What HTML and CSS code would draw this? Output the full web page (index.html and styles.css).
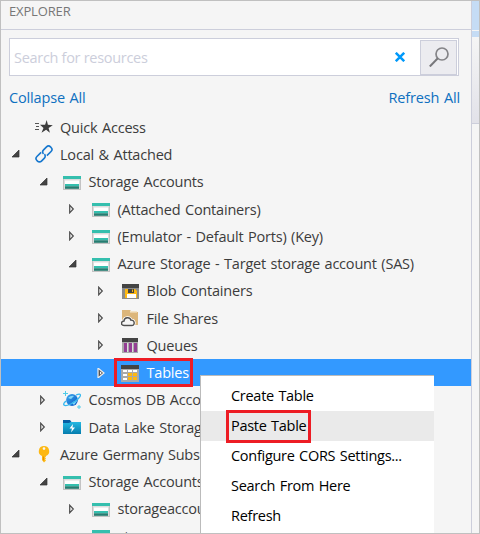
FILE: index.html
```html
<!DOCTYPE html>
<html lang="en">
<head>
<meta charset="utf-8">
<title>Explorer</title>
<link rel="stylesheet" href="styles.css">
</head>
<body>
<svg class="defs" width="0" height="0" aria-hidden="true">
  <linearGradient id="planet" x2="1" y2="1"><stop stop-color="#3da6ed"/><stop offset="1" stop-color="#0759c5"/></linearGradient>
  <linearGradient id="lake" x2="0" y2="1"><stop stop-color="#25b8e2"/><stop offset="1" stop-color="#057dae"/></linearGradient>
  <symbol id="open" viewBox="0 0 10 10"><path d="M8 1v7H1z" fill="#444" stroke="#333" stroke-width=".7"/></symbol>
  <symbol id="closed" viewBox="0 0 10 10"><path d="M1.7 1.2v7.6L5.3 5z" fill="#eee" stroke="#4c4c4c" stroke-width="1.2"/></symbol>
  <symbol id="closed-selected" viewBox="0 0 10 10"><path d="M1 0v10L7 5z" fill="#555" stroke="#eee" stroke-width="1.200"/><path d="M3 3.500v3L4.800 5z" fill="#fff"/></symbol>
  <symbol id="star" viewBox="0 0 18 18"><path d="M0 5.500h4M1 8.500h3M0 11.500h4" stroke="#555"/><path d="M11.700 2l1.200 4.800 4.900.4-4.200 2.700 1.300 4.900-3.800-3.100-4.600 3 2-4.800L5 6.700l5.100.1z" fill="#3c3c3c"/></symbol>
  <symbol id="link" viewBox="0 0 18 18"><g transform="rotate(-45 9 9)" fill="none" stroke="#1677ce" stroke-width="1.6"><path d="M8.1 5.8H2.2A2.8 2.8 0 0 0-.6 8.6v.8a2.8 2.8 0 0 0 2.8 2.8h4.2a2.8 2.8 0 0 0 2.8-2.8"/><path d="M9.9 12.2h5.9a2.8 2.8 0 0 0 2.8-2.8v-.8a2.8 2.8 0 0 0-2.8-2.8h-4.2a2.8 2.8 0 0 0-2.8 2.8"/></g></symbol>
  <symbol id="storage" viewBox="0 0 18 18"><path d="M0 3h18v14H0z" fill="#c3c3c3"/><path d="M1 6h16v10H1z" fill="#ddd"/><path d="M0 3h18v3H0z" fill="#35bfae"/><path d="M2 7.500h14V11H2z" fill="#fff"/><path d="M2 11h14v2.300H2z" fill="#35bfae"/><path d="M2 13.300h14v2.500H2z" fill="#267d71"/></symbol>
  <symbol id="blob" viewBox="0 0 18 18"><path d="M1 2h17v4H1z" fill="#444"/><path d="M1 6h17v11H1z" fill="#8b8b8b"/><path d="M4 7h10l2 2v7H4z" fill="#fcb813"/><path d="M7 7h6v4H7z" fill="#444"/><path d="M11 7.5h1v2.5h-1z" fill="#fcb813"/><path d="M6 12h9v4H6z" fill="#fff"/></symbol>
  <symbol id="share" viewBox="0 0 18 18"><path d="M1 1h8l2 2h6v13H1z" fill="#dcb67a"/><path d="M9 2h7v1.6H9z" fill="#f3e3c5"/><path d="M3.2 16.5C-.5 16.5-.3 12 3 12c.2-4 6-4.300 7-.8 3.700-.7 4.500 5.300.7 5.300z" fill="#f6f6f6" stroke="#fff" stroke-width="3"/><path d="M3.200 16.500C-.5 16.500-.3 12 3 12c.2-4 6-4.300 7-.8 3.700-.7 4.500 5.300.7 5.300z" fill="#f6f6f6" stroke="#505050" stroke-width="1.400"/></symbol>
  <symbol id="queue" viewBox="0 0 18 18"><path d="M1 2h16v4H1z" fill="#444"/><path d="M1 6h16v11H1z" fill="#aaa"/><path d="M3 7h3v9H3zM8 7h3v9H8zM13 7h3v9h-3z" fill="#943e94"/><path d="M6.500 7v9M11.500 7v9" stroke="#ddd"/></symbol>
  <symbol id="table" viewBox="0 0 18 18"><path d="M0 1h18v17H0z" fill="#aaa"/><path d="M0 1h18v4H0z" fill="#444"/><path d="M2 6h4v2H2zM7 6h4v2H7zM12 6h4v2h-4zM2 10h4v2H2zM2 14h4v2H2z" fill="#fff"/><path d="M7 9h4v3H7zM12 9h4v3h-4zM7 13h4v3H7zM12 13h4v3h-4z" fill="#fcb813"/></symbol>
  <symbol id="cosmos" viewBox="0 0 18 18"><circle cx="9" cy="9" r="5.900" fill="url(#planet)"/><path d="M5 7q3-3 6-2l-3 3zM9 12q3-3 5-2l-3 4z" fill="#81d6f7"/><path d="M13 4c5-2 6 0 2 4-4 4-12 8-14 6-.9-.9.200-2.300 2-4" fill="none" stroke="#35b8ef" stroke-width="1.300"/><path d="M2.500 0v5M0 2.500h5M16 14v4M14 16h4" stroke="#50cce8"/></symbol>
  <symbol id="folder" viewBox="0 0 18 18"><path d="M0 2h7l1.500 2H18v4H0z" fill="#075ea4"/><path d="M0 5h6l2-1h10v12H0z" fill="url(#lake)"/><path d="M10 6L6.500 10.500h2.500l-1 4 4-5H9.500z" fill="#fff"/></symbol>
  <symbol id="key" viewBox="0 0 18 18"><path d="M9 1a5.200 5.200 0 0 0-2 10v4l2 2.500 2-2-1-1 1-1-1-1 1-1V11A5.200 5.200 0 0 0 9 1z" fill="#fdb813"/><circle cx="9" cy="3.600" r="1.300" fill="#f5f5f5"/><path d="M8.400 11.500v4" stroke="#e38b00"/></symbol>
</svg>
<div class="window">
  <aside class="explorer">
    <header class="title">EXPLORER</header>
    <div class="search"><span class="placeholder">Search for resources</span>
      <svg class="clear" viewBox="0 0 10 10"><path d="M.8.800l8.400 8.400M9.200.8.800 9.200" stroke="#0099fa" stroke-width="2.500"/></svg>
      <span class="find"><svg viewBox="0 0 20 20"><circle cx="13" cy="7" r="6" fill="none" stroke="#848488" stroke-width="1.700"/><path d="M8.800 11.300.8 19.500" stroke="#77777b" stroke-width="2"/></svg></span>
    </div>
    <nav class="links"><span class="collapse">Collapse All</span><span class="refresh">Refresh All</span></nav>
    <div class="tree">
      <div class="row l0"><i class="arrow"></i><svg class="icon"><use href="#star"/></svg><span class="label">Quick Access</span></div>
      <div class="row l0"><svg class="arrow"><use href="#open"/></svg><svg class="icon"><use href="#link"/></svg><span class="label">Local &amp; Attached</span></div>
      <div class="row l1"><svg class="arrow"><use href="#open"/></svg><svg class="icon"><use href="#storage"/></svg><span class="label">Storage Accounts</span></div>
      <div class="row l2"><svg class="arrow"><use href="#closed"/></svg><svg class="icon"><use href="#storage"/></svg><span class="label">(Attached Containers)</span></div>
      <div class="row l2"><svg class="arrow"><use href="#closed"/></svg><svg class="icon"><use href="#storage"/></svg><span class="label">(Emulator - Default Ports) (Key)</span></div>
      <div class="row l2"><svg class="arrow"><use href="#open"/></svg><svg class="icon"><use href="#storage"/></svg><span class="label">Azure Storage - Target storage account (SAS)</span></div>
      <div class="row l3"><svg class="arrow"><use href="#closed"/></svg><svg class="icon"><use href="#blob"/></svg><span class="label">Blob Containers</span></div>
      <div class="row l3"><svg class="arrow"><use href="#closed"/></svg><svg class="icon"><use href="#share"/></svg><span class="label">File Shares</span></div>
      <div class="row l3"><svg class="arrow"><use href="#closed"/></svg><svg class="icon"><use href="#queue"/></svg><span class="label">Queues</span></div>
      <div class="row l3 selected"><svg class="arrow"><use href="#closed-selected"/></svg><svg class="icon"><use href="#table"/></svg><span class="label">Tables</span><b class="mark"></b></div>
      <div class="row l1"><svg class="arrow"><use href="#closed"/></svg><svg class="icon"><use href="#cosmos"/></svg><span class="label">Cosmos DB Accounts</span></div>
      <div class="row l1"><svg class="arrow"><use href="#closed"/></svg><svg class="icon"><use href="#folder"/></svg><span class="label">Data Lake Storage</span></div>
      <div class="row l0"><svg class="arrow"><use href="#open"/></svg><svg class="icon"><use href="#key"/></svg><span class="label">Azure Germany Subscription</span></div>
      <div class="row l1"><svg class="arrow"><use href="#open"/></svg><svg class="icon"><use href="#storage"/></svg><span class="label">Storage Accounts</span></div>
      <div class="row l2"><svg class="arrow"><use href="#closed"/></svg><svg class="icon"><use href="#storage"/></svg><span class="label">storageaccount</span></div>
      <div class="row l2"><i class="arrow"></i><svg class="icon"><use href="#storage"/></svg><span class="label">storage</span></div>
    </div>
  </aside>
  <div class="editor"><div class="tab"></div><div class="tabline"></div><div class="toolbar"></div></div>
  <div class="menu">
    <div class="item">Create Table</div>
    <div class="item hover"><span>Paste Table</span><b class="mark"></b></div>
    <div class="item">Configure CORS Settings...</div>
    <div class="item">Search From Here</div>
    <div class="item">Refresh</div>
  </div>
</div>
</body>
</html>
```
FILE: styles.css
```css
* { box-sizing: border-box; }
body { margin: 0; font-family: "Open Sans", "Noto Sans", sans-serif; }
.defs { position: absolute; }
.window { position: relative; display: flex; width: 480px; height: 534px; overflow: hidden; background: #f5f5f5; border: 1px solid #c0c0c0; }
.explorer { width: 471px; height: 532px; overflow: hidden; border-right: 1px solid #cccedb; color: #3c3c3c; font-size: 14.500px; }
.title { height: 29px; border-bottom: 1px solid #cccedb; padding: 1px 8px; font-size: 13px; line-height: 18px; letter-spacing: -.15px; color: #777; }
.search { display: flex; align-items: center; width: 450px; height: 38px; margin: 8px 0 0 8px; padding: 0 1px 0 4px; border: 1px solid #cccedb; background: #fff; }
.placeholder { flex: 1; color: #cccedb; font-size: 14.500px; letter-spacing: -.3px; }
.clear { width: 10px; height: 10px; margin-right: 15px; }
.find { display: flex; align-items: center; justify-content: center; width: 37px; height: 35px; border: 1px solid #cccedb; background: #ececf0; }
.find svg { width: 20px; height: 20px; }
.links { display: flex; justify-content: space-between; height: 37.600px; padding: 10px 11px 0 8px; line-height: 23px; color: #0e70c0; letter-spacing: -.15px; word-spacing: 1px; }
.row { position: relative; display: flex; align-items: center; height: 27.270px; white-space: nowrap; }
.l0 { padding-left: 9.500px; }
.l1 { padding-left: 38px; }
.l2 { padding-left: 67px; }
.l3 { padding-left: 96px; }
.arrow { flex: none; width: 10px; height: 10px; margin-right: 14px; }
.icon { flex: none; width: 18px; height: 18px; margin-right: 7.500px; }
.label { letter-spacing: -.2px; word-spacing: 1px; }
.selected { background: #39f; color: #fff; }
.mark { position: absolute; border: 3px solid #ed1c24; }
.selected .mark { left: 113px; top: -1px; width: 79px; height: 29px; }
.editor { width: 7px; background: #f5f5f5; }
.tab { height: 29px; background: #c5dcf5; }
.tabline { height: 7px; border-top: 1px solid #f5f5f5; background: #c5dcf5; }
.toolbar { height: 87px; background: linear-gradient(#f5f5f5, #e2e2e9); border-bottom: 1px solid #cccedb; }
.menu { position: absolute; left: 199px; top: 374px; width: 234px; height: 158px; padding-top: 5px; border: solid #bbb; border-width: 1px 0 0 1px; background: #fff; color: #000; font-size: 14.500px; }
.item { position: relative; height: 30px; padding-left: 30px; line-height: 30px; letter-spacing: -.28px; word-spacing: 1px; white-space: nowrap; }
.hover { background: #eaeaea; }
.hover .mark { left: 25px; top: -1px; width: 85px; height: 33px; }
```
